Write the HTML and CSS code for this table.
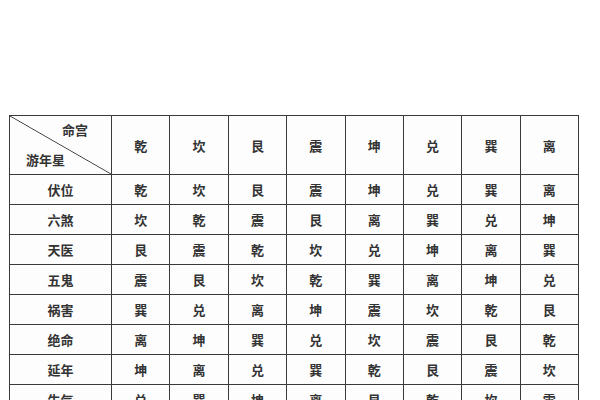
FILE: index.html
```html
<!DOCTYPE html>
<html lang="zh">
<head>
<meta charset="utf-8">
<link rel="stylesheet" href="styles.css">
</head>
<body>
<div class="page">
  <div class="grid">
    <div class="corner">
      <span class="c-top">命宫</span>
      <span class="c-bot">游年星</span>
    </div>
    <div class="hd">乾</div><div class="hd">坎</div><div class="hd">艮</div><div class="hd">震</div><div class="hd">坤</div><div class="hd">兑</div><div class="hd">巽</div><div class="hd">离</div>

    <div class="lb">伏位</div><div>乾</div><div>坎</div><div>艮</div><div>震</div><div>坤</div><div>兑</div><div>巽</div><div>离</div>
    <div class="lb">六煞</div><div>坎</div><div>乾</div><div>震</div><div>艮</div><div>离</div><div>巽</div><div>兑</div><div>坤</div>
    <div class="lb">天医</div><div>艮</div><div>震</div><div>乾</div><div>坎</div><div>兑</div><div>坤</div><div>离</div><div>巽</div>
    <div class="lb">五鬼</div><div>震</div><div>艮</div><div>坎</div><div>乾</div><div>巽</div><div>离</div><div>坤</div><div>兑</div>
    <div class="lb">祸害</div><div>巽</div><div>兑</div><div>离</div><div>坤</div><div>震</div><div>坎</div><div>乾</div><div>艮</div>
    <div class="lb">绝命</div><div>离</div><div>坤</div><div>巽</div><div>兑</div><div>坎</div><div>震</div><div>艮</div><div>乾</div>
    <div class="lb">延年</div><div>坤</div><div>离</div><div>兑</div><div>巽</div><div>乾</div><div>艮</div><div>震</div><div>坎</div>
    <div class="lb">生气</div><div>兑</div><div>巽</div><div>坤</div><div>离</div><div>艮</div><div>乾</div><div>坎</div><div>震</div>
  </div>
</div>
</body>
</html>
```

FILE: styles.css
```css
html, body {
  margin: 0;
  padding: 0;
  background: #ffffff;
}
.page {
  width: 600px;
  height: 400px;
  overflow: hidden;
  padding: 115px 0 0 9px;
  box-sizing: border-box;
}
.grid {
  width: 570px;
  box-sizing: border-box;
  display: grid;
  grid-template-columns: 101px repeat(8, 1fr);
  grid-template-rows: 58px repeat(8, 29px);
  gap: 1px;
  padding: 1px;
  background: #3a3a3a;
  font-family: "Noto Sans CJK SC", sans-serif;
  font-size: 13px;
  font-weight: 700;
  color: #333333;
}
.grid > div {
  background: #fdfdfd;
  display: flex;
  align-items: center;
  justify-content: center;
  line-height: 1;
}
.grid > .corner {
  display: flex;
  flex-direction: column;
  justify-content: space-between;
  align-items: stretch;
  padding: 7px 0 8px 0;
  box-sizing: border-box;
  background: linear-gradient(to top right, #fdfdfd calc(50% - 0.8px), #3a3a3a 50%, #fdfdfd calc(50% + 0.8px));
}
.c-top {
  padding-left: 52px;
}
.c-bot {
  padding-left: 16px;
}
```
